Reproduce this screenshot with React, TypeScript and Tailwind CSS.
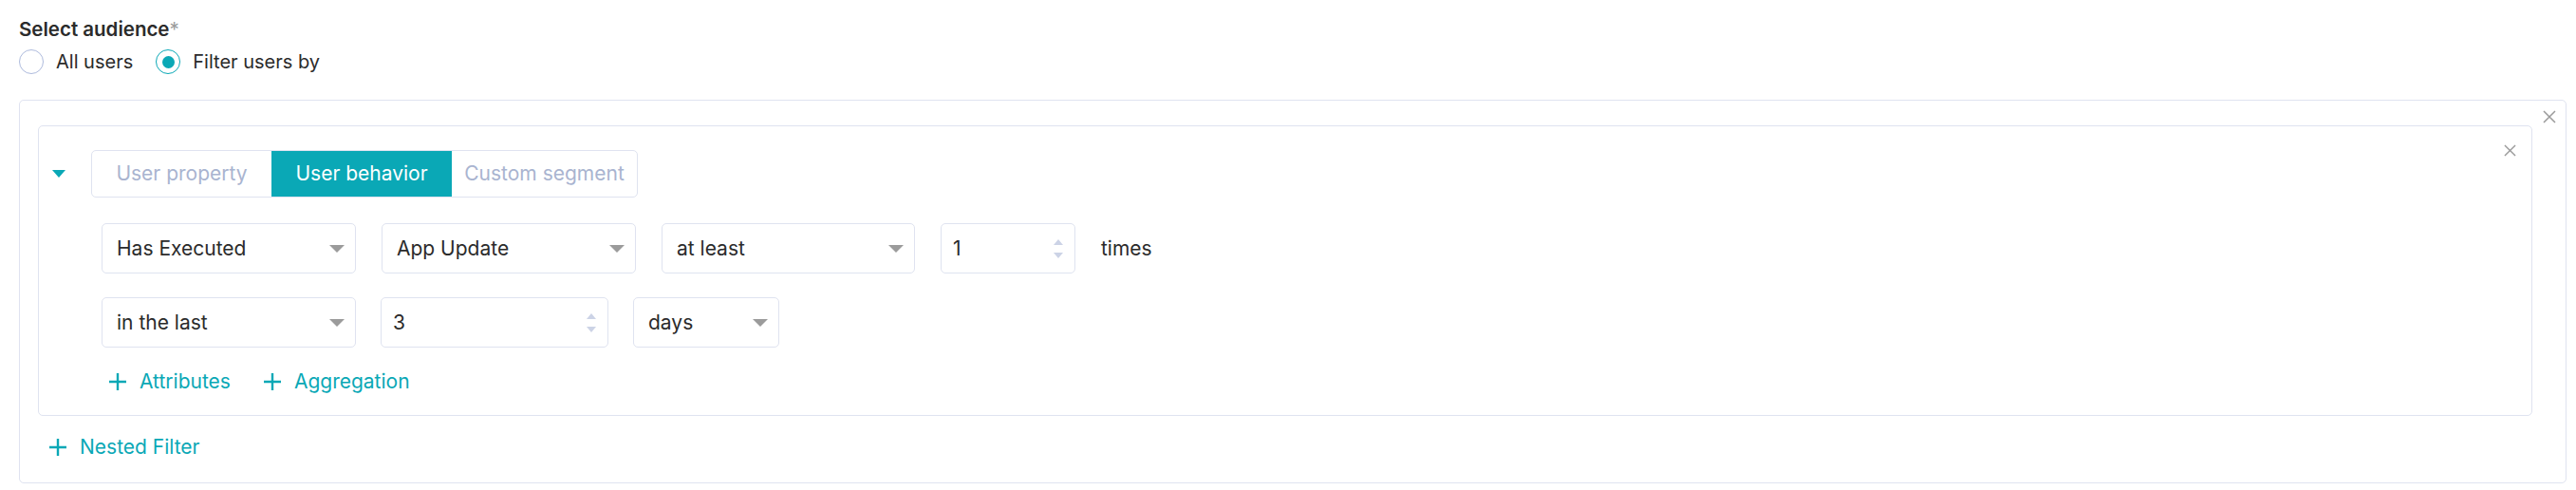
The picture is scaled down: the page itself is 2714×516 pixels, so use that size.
import React from "react";

const font = { fontFamily: "Inter, 'Open Sans', sans-serif" };

function Radio({ checked, label }: { checked?: boolean; label: string }) {
  return (
    <label className="flex items-center gap-[13px]">
      <span
        className={`grid h-[26px] w-[26px] place-items-center rounded-full border-[1.5px] ${
          checked ? "border-[#0aa8b6]" : "border-[#aebbdd]"
        }`}
      >
        {checked ? <span className="h-[13px] w-[13px] rounded-full bg-[#0aa8b6]" /> : null}
      </span>
      <span className="text-[20px] leading-[28px] text-[#2b2b2b]">{label}</span>
    </label>
  );
}

function Caret() {
  return (
    <svg width="16" height="8" viewBox="0 0 16 8" className="shrink-0">
      <path d="M0 0 H16 L8 8 Z" fill="#9b9b9b" />
    </svg>
  );
}

function Select({ value, width }: { value: string; width: string }) {
  return (
    <div
      className={`flex h-[53px] items-center justify-between rounded-[5px] border border-[#dfe3f0] bg-white pl-[15px] pr-[11px] ${width}`}
    >
      <span className="text-[21px] text-[#2b2b2b]">{value}</span>
      <Caret />
    </div>
  );
}

function NumberInput({ value, width }: { value: string; width: string }) {
  return (
    <div
      className={`flex h-[53px] items-center justify-between rounded-[5px] border border-[#dfe3f0] bg-white pl-[12px] pr-[12px] ${width}`}
    >
      <span className="text-[21px] text-[#2b2b2b]">{value}</span>
      <span className="flex flex-col items-center gap-[8px]">
        <svg width="10" height="6" viewBox="0 0 10 6">
          <path d="M0 6 L5 0 L10 6 Z" fill="#ccd3e6" />
        </svg>
        <svg width="10" height="6" viewBox="0 0 10 6">
          <path d="M0 0 H10 L5 6 Z" fill="#ccd3e6" />
        </svg>
      </span>
    </div>
  );
}

function Plus() {
  return (
    <svg width="20" height="20" viewBox="0 0 20 20" className="shrink-0">
      <path d="M10 1 V19 M1 10 H19" stroke="#0aa8b6" strokeWidth="2.4" />
    </svg>
  );
}

function AddLink({ label }: { label: string }) {
  return (
    <button type="button" className="flex items-center gap-[13px] text-[21px] leading-[28px] text-[#0aa8b6]">
      <Plus />
      {label}
    </button>
  );
}

function Close({ size }: { size: number }) {
  return (
    <svg width={size} height={size} viewBox="0 0 14 14">
      <path d="M1 1 L13 13 M13 1 L1 13" stroke="#9a9a9a" strokeWidth="1.5" />
    </svg>
  );
}

export default function App() {
  return (
    <div className="min-h-[516px] w-[2714px] bg-white pl-[20px] pr-[10px] pt-[17px]" style={font}>
      <div className="text-[20.5px] font-semibold leading-[28px] text-[#2b2b2b]">
        Select audience<span className="font-normal text-[#9b9b9b]">*</span>
      </div>
      <div className="mt-[6px] flex items-center gap-[24px]">
        <Radio label="All users" />
        <Radio checked label="Filter users by" />
      </div>

      <div className="relative mt-[26px] rounded-[5px] border border-[#dfe3f0] pb-[23px] pl-[19px] pr-[35px] pt-[26px]">
        <button type="button" className="absolute right-[10px] top-[10px]" aria-label="Remove">
          <Close size={14} />
        </button>

        <div className="relative rounded-[5px] border border-[#dfe3f0] pb-[21px] pl-[14px] pt-[25px]">
          <button type="button" className="absolute right-[16px] top-[19px]" aria-label="Remove rule">
            <Close size={13} />
          </button>

          <div className="flex items-center gap-[27px]">
            <svg width="14" height="8" viewBox="0 0 14 8">
              <path d="M0 0 H14 L7 8 Z" fill="#0aa8b6" />
            </svg>
            <div className="flex h-[50px] overflow-hidden rounded-[5px] border border-[#dfe3f0] text-[21px]">
              <div className="flex w-[189px] items-center justify-center text-[#a9b4d0]">User property</div>
              <div className="flex w-[190px] items-center justify-center bg-[#0aa8b6] text-white">User behavior</div>
              <div className="flex w-[195px] items-center justify-center text-[#a9b4d0]">Custom segment</div>
            </div>
          </div>

          <div className="pl-[52px]">
            <div className="mt-[27px] flex items-center gap-[27px]">
              <Select value="Has Executed" width="w-[268px]" />
              <Select value="App Update" width="w-[268px]" />
              <Select value="at least" width="w-[267px]" />
              <NumberInput value="1" width="w-[142px]" />
              <span className="text-[21px] text-[#2b2b2b]">times</span>
            </div>
            <div className="mt-[25px] flex items-center gap-[26px]">
              <Select value="in the last" width="w-[268px]" />
              <NumberInput value="3" width="w-[240px]" />
              <Select value="days" width="w-[154px]" />
            </div>
            <div className="mt-[22px] flex items-center gap-[34px] pl-[7px]">
              <AddLink label="Attributes" />
              <AddLink label="Aggregation" />
            </div>
          </div>
        </div>

        <div className="mt-[19px] pl-[11px]">
          <AddLink label="Nested Filter" />
        </div>
      </div>
    </div>
  );
}
